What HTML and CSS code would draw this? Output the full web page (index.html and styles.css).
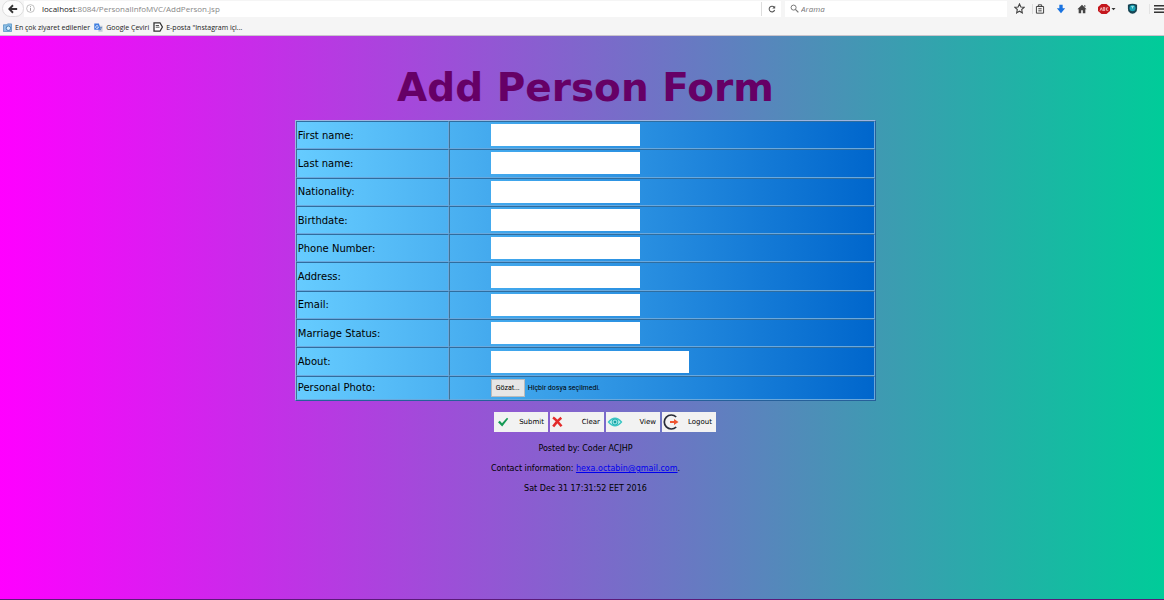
FILE: index.html
```html
<!DOCTYPE html>
<html lang="tr">
<head>
<meta charset="utf-8">
<title>Add Person Form</title>
<link rel="stylesheet" href="styles.css">
</head>
<body>
<header class="chrome">
  <div class="toolbar">
    <button class="back" aria-label="Back"><svg viewBox="0 0 12 12" width="10" height="10"><path d="M11 6H2M6 1.5L1.5 6L6 10.5" fill="none" stroke="#333" stroke-width="2.2"/></svg></button>
    <div class="address">
      <svg class="info" viewBox="0 0 10 10" width="9" height="9"><circle cx="5" cy="5" r="4.3" fill="none" stroke="#aaa" stroke-width=".8"/><path d="M5 4.3V7.6M5 2.4V3.4" stroke="#999"/></svg>
      <span class="url"><span class="host">localhost</span>:8084/PersonalInfoMVC/AddPerson.jsp</span>
      <button class="reload" aria-label="Reload"><svg viewBox="0 0 10 10" width="8" height="8"><path d="M7.8 3A3.5 3.5 0 1 0 8.3 6.2" fill="none" stroke="#555" stroke-width="1.3"/><path d="M9 .8V4.4H5.4Z" fill="#555"/></svg></button>
    </div>
    <label class="search">
      <svg viewBox="0 0 10 10" width="9" height="9"><circle cx="4" cy="4" r="2.8" fill="none" stroke="#777" stroke-width="1.1"/><path d="M6 6L9.3 9.3" stroke="#777" stroke-width="1.4"/></svg>
      <input type="text" placeholder="Arama" aria-label="Arama">
    </label>
    <nav class="tools">
      <button aria-label="Bookmark"><svg viewBox="0 0 12 12" width="11" height="11"><path d="M6 1L7.5 4.3L11 4.7L8.4 7.1L9.1 10.7L6 8.9L2.9 10.7L3.6 7.1L1 4.7L4.5 4.3Z" fill="none" stroke="#444" stroke-width="1.2"/></svg></button>
      <button class="library" aria-label="Library"><svg viewBox="0 0 12 12" width="10" height="10"><path d="M1.7 3H10.3V11H1.7ZM4 3V1H8V3M4 5.7H8M4 8.2H8" fill="none" stroke="#444" stroke-width="1.2"/></svg></button>
      <button aria-label="Downloads"><svg viewBox="0 0 12 12" width="10" height="10"><path d="M4 1H8V5H11L6 11L1 5H4Z" fill="#1a73e0"/></svg></button>
      <button aria-label="Home"><svg viewBox="0 0 12 12" width="10" height="10"><path d="M6 1L11.5 6.3H10V11H7V7.5H5V11H2V6.3H.5ZM8.5 1.5H10V4L8.5 2.8Z" fill="#444"/></svg></button>
      <button class="block" aria-label="Ad blocker"><svg viewBox="0 0 18 12" width="18" height="12"><path d="M3.5 1H8.5L12 4V8L8.5 11H3.5L0 8V4Z" fill="#c4161c"/><path d="M2 7.8L3.2 4.7L4.4 7.8M5.2 4.5V7.5H6.8V6H5.2M6.8 6V4.5H5.2M10.3 4.8H8.5V7.3H10.3" fill="none" stroke="#f5caca" stroke-width=".8"/><path d="M13.5 5H17.5L15.5 7.2Z" fill="#333"/></svg></button>
      <button aria-label="Shield"><svg viewBox="0 0 12 12" width="11" height="11"><path d="M1 2Q6 -.5 11 2V6Q11 11 6 11.7Q1 11 1 6Z" fill="#174453"/><circle cx="6" cy="5.6" r="3.3" fill="#18a3b5"/><path d="M4.5 4H7.5M6 4V6" stroke="#b3edf0" stroke-width=".9"/></svg></button>
      <button class="menu" aria-label="Menu"><svg viewBox="0 0 10 10" width="10" height="10"><path d="M0 1.8H10M0 5H10M0 8.2H10" stroke="#333" stroke-width="1.6"/></svg></button>
    </nav>
  </div>
  <nav class="bookmarks">
    <a href="#"><svg viewBox="0 0 10 10" width="9" height="9"><path d="M.5 2H4L5 1H9.5V9.5H.5Z" fill="#8fc1e6" stroke="#4b8cc2" stroke-width=".8"/><circle cx="6" cy="5.8" r="2.5" fill="#d8edfb" stroke="#3778b0"/></svg>En çok ziyaret edilenler</a>
    <a href="#"><svg viewBox="0 0 10 10" width="9" height="9"><path d="M4 3H9.5V9.7H5Z" fill="#c6cdd8"/><path d="M.3 .5H5.5L7.5 7.5H.3Z" fill="#3f7fe0"/><path d="M4.7 3.5A1.6 1.6 0 1 0 5 4.5H3.7" fill="none" stroke="#fff" stroke-width=".8"/><path d="M6.7 5H9M8 5Q8 7 6.6 8" fill="none" stroke="#4777b8" stroke-width=".7"/></svg>Google Çeviri</a>
    <a href="#"><svg viewBox="0 0 10 10" width="10" height="10"><path d="M1 .8H7L9.4 5L7 9.2H1Z" fill="#fff" stroke="#333" stroke-width="1.3"/><path d="M2.7 3.5H6M2.7 5.2H6.5" stroke="#555"/></svg>E-posta "Instagram içi...</a>
  </nav>
</header>
<main class="page">
  <h1>Add Person Form</h1>
  <form>
    <table class="fields">
      <tr><td><label for="first">First name:</label></td><td><input id="first" type="text"></td></tr>
      <tr><td><label for="last">Last name:</label></td><td><input id="last" type="text"></td></tr>
      <tr><td><label for="nation">Nationality:</label></td><td><input id="nation" type="text"></td></tr>
      <tr><td><label for="birth">Birthdate:</label></td><td><input id="birth" type="text"></td></tr>
      <tr><td><label for="phone">Phone Number:</label></td><td><input id="phone" type="text"></td></tr>
      <tr><td><label for="address">Address:</label></td><td><input id="address" type="text"></td></tr>
      <tr><td><label for="email">Email:</label></td><td><input id="email" type="text"></td></tr>
      <tr><td><label for="marriage">Marriage Status:</label></td><td><input id="marriage" type="text"></td></tr>
      <tr><td><label for="about">About:</label></td><td><input id="about" class="wide" type="text"></td></tr>
      <tr class="photo"><td><label for="photo">Personal Photo:</label></td><td><div class="file"><button id="photo" type="button">Gözat...</button><span>Hiçbir dosya seçilmedi.</span></div></td></tr>
    </table>
    <div class="actions">
      <button type="submit"><svg viewBox="0 0 16 16" width="16" height="16"><path d="M3 8.2L4.8 6.7L7 9.2L12 3.7L13.2 4.8L7.2 12.5Z" fill="#159a55"/></svg>Submit</button>
      <button type="reset"><svg viewBox="0 0 16 16" width="16" height="16"><path d="M2 3.5Q5 5.5 10.5 12.3M10.3 3.7Q6 7 2.2 12.5" fill="none" stroke="#e32b2b" stroke-width="2.5"/></svg>Clear</button>
      <button type="button"><svg viewBox="0 0 16 16" width="16" height="16"><path d="M1.5 8Q8 .5 14.5 8Q8 15.5 1.5 8Z" fill="#d7f5f3" stroke="#3cc6c4" stroke-width="1.3"/><circle cx="8" cy="8" r="3" fill="#8de0dc" stroke="#29b5b5"/><circle cx="8" cy="8" r="1.2" fill="#189ca4"/></svg>View</button>
      <button type="button"><svg viewBox="0 0 16 16" width="16" height="16"><path d="M13.2 3A7 7 0 1 0 13.2 13" fill="none" stroke="#282c38" stroke-width="1.7"/><path d="M7 7H11V5L15.5 8L11 11V9H7Z" fill="#ee5632"/></svg>Logout</button>
    </div>
  </form>
  <footer>
    <p>Posted by: Coder ACJHP</p>
    <p>Contact information: <a href="mailto:hexa.octabin@gmail.com">hexa.octabin@gmail.com</a>.</p>
    <p>Sat Dec 31 17:31:52 EET 2016</p>
  </footer>
</main>
</body>
</html>
```
FILE: styles.css
```css
* { box-sizing: border-box; }
body {
  margin: 0;
  min-height: 100vh;
  display: flex;
  flex-direction: column;
  font-family: "DejaVu Sans", Verdana, sans-serif;
}
button { font: inherit; color: inherit; padding: 0; border: 0; background: none; }
svg { display: block; flex: none; }

.chrome {
  background: #f5f5f5;
  border-bottom: 1px solid #c9c4cc;
  font-family: "Open Sans", "Noto Sans", sans-serif;
}
.toolbar { display: flex; align-items: center; height: 17px; }
.back {
  width: 22px;
  height: 17px;
  margin-left: 2px;
  display: grid;
  place-items: center;
  border: 1px solid #ddd;
  border-radius: 9px;
  background: #fcfcfc;
}
.address {
  flex: 1;
  height: 16px;
  display: flex;
  align-items: center;
  gap: 7px;
  padding-left: 2px;
  background: #fff;
  font-size: 8px;
}
.url { flex: 1; color: #888; }
.host { color: #222; }
.reload { width: 20px; height: 14px; display: grid; place-items: center; border-left: 1px solid #ddd; }
.search {
  width: 222px;
  height: 16px;
  margin-left: 4px;
  display: flex;
  align-items: center;
  gap: 2px;
  padding-left: 5px;
  background: #fff;
}
.search input {
  flex: 1;
  min-width: 0;
  padding: 0;
  border: 0;
  background: none;
  font: italic 8px "Open Sans", sans-serif;
}
.search input::placeholder { color: #777; }
.tools { display: flex; align-items: center; gap: 11px; padding-left: 7px; }
.library { margin-left: -4px; padding-left: 2px; border-left: 1px solid #ddd; }
.menu { padding-left: 4px; border-left: 1px solid #e3e3e3; }
.bookmarks {
  display: flex;
  align-items: center;
  height: 18px;
  gap: 4px;
  padding: 2px 0 0 3px;
  font-size: 7px;
}
.bookmarks a { display: flex; align-items: center; gap: 3px; color: #222; text-decoration: none; }

.page {
  flex: 1;
  padding: 28px 0 0 7px;
  border-bottom: 1px solid #5b1a78;
  background: linear-gradient(to right, #ff00ff, #00cc99);
  text-align: center;
}
h1 { margin: 0 0 9px; font-size: 39px; line-height: 47px; color: #660066; }
.fields {
  width: calc(50% + 3px);
  height: 281px;
  margin: 0 auto;
  border-spacing: 0;
  border: 1px solid;
  border-color: #9fb5e0 #26609a #26609a #9fb5e0;
  background: linear-gradient(to right, #66ccff, #0066cc);
  text-align: left;
  font-size: 10px;
}
.fields td {
  height: 28px;
  padding: 0 1px;
  border: 1px solid;
  border-color: #2f6d9f #6aa8dc #6aa8dc #3f7397;
}
.fields td:first-child { width: 153px; }
.fields td:last-child { padding-left: 41px; }
.fields .photo td { height: 24px; }
.fields input { display: block; width: 149px; height: 22px; border: 0; background: #fff; }
.fields .wide { width: 198px; }
.file { display: flex; align-items: center; gap: 3px; font: 7px Roboto, sans-serif; }
.file button { width: 34px; height: 18px; border: 1px solid #bbb; background: #e6e6e6; }

.actions {
  display: flex;
  justify-content: center;
  gap: 2px;
  margin: 11px 0 10px;
  padding-left: 39px;
}
.actions button {
  width: 54px;
  height: 20px;
  display: flex;
  align-items: center;
  justify-content: space-between;
  padding: 0 4px 0 1px;
  background: #f2f2f2;
  font-size: 7px;
}
footer { font-size: 8px; }
footer p { margin: 0 0 7px; line-height: 13px; }
footer a { color: #0000ee; }
```
